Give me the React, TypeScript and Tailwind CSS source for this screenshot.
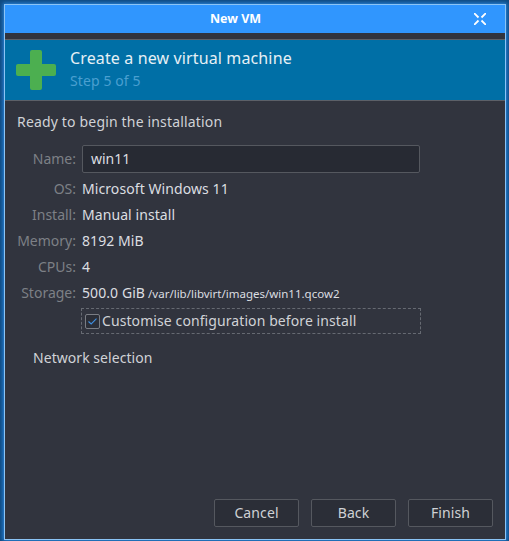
import React from "react";

function Row({ label, children }: { label: string; children: React.ReactNode }) {
  return (
    <div className="flex items-center h-[26px]">
      <div className="w-[59px] text-right text-[#7d8086] shrink-0">{label}</div>
      <div className="ml-[6px] text-[#dcdee1] flex items-baseline tracking-[0.08px]">{children}</div>
    </div>
  );
}

function Btn({ children }: { children: React.ReactNode }) {
  return (
    <div className="w-[85px] h-[28px] flex items-center justify-center rounded-[2px] border border-[#55585f] bg-[#2b2e37] text-[#cfd1d5] tracking-[0.1px]">
      {children}
    </div>
  );
}

export default function App() {
  return (
    <div className="w-[509px] h-[541px] bg-[#0f4a80] pt-[4px] pl-[4px] overflow-hidden font-['Noto_Sans',sans-serif] text-[14px] leading-[20px]">
      <div className="w-[502px] h-[536px] border border-[#8cc4f5] bg-[#31343e] flex flex-col shadow-[0_0_4px_1px_#2a86dc]">
        <div className="h-[28px] bg-[#3096fe] flex items-center justify-center pr-[39px] relative shrink-0">
          <span className="text-white font-bold text-[12.5px]">New VM</span>
          <svg className="absolute left-[469px] top-[8px]" width="12" height="12" viewBox="0 0 12 12" fill="none" stroke="#fff" strokeWidth="1.8">
            <path d="M0 0 L4.5 4.5 M12 0 L7.5 4.5 M0 12 L4.5 7.5 M12 12 L7.5 7.5" />
          </svg>
        </div>
        <div className="mt-[6px] h-[62px] bg-[#006fa6] border-y border-[#5c6068] border-x-0 flex items-center shrink-0">
          <svg className="ml-[11px] shrink-0" width="40" height="40" viewBox="0 0 40 40" fill="#4caf50">
            <rect x="14" y="0" width="12" height="40" rx="2" />
            <rect x="0" y="14" width="40" height="12" rx="2" />
          </svg>
          <div className="ml-[14px] pb-[2px]">
            <div className="text-[#e6f0f5] text-[16px] leading-[24px] tracking-[0.13px]">Create a new virtual machine</div>
            <div className="text-[#4a9fd0] text-[14px] leading-[22px] tracking-[0.1px]">Step 5 of 5</div>
          </div>
        </div>
        <div className="flex-1 flex flex-col px-[12px] pt-[11px] pb-[12px]">
          <div className="text-[#d0d2d6] tracking-[0.17px]">Ready to begin the installation</div>
          <div className="mt-[13px]">
            <div className="flex items-center h-[28px] mb-[3px]">
              <div className="w-[59px] text-right text-[#7d8086] shrink-0">Name:</div>
              <div className="ml-[6px] w-[338px] h-[28px] border border-[#55585f] rounded-[2px] bg-[#272a33] text-[#dcdee1] pl-[8px] flex items-center">win11</div>
            </div>
            <Row label="OS:">Microsoft Windows 11</Row>
            <Row label="Install:">Manual install</Row>
            <Row label="Memory:">8192 MiB</Row>
            <Row label="CPUs:">4</Row>
            <Row label="Storage:">
              500.0 GiB
              <span className="ml-[3px] text-[11.5px] tracking-normal">/var/lib/libvirt/images/win11.qcow2</span>
            </Row>
          </div>
          <div className="mt-[2px] ml-[64px] w-[340px] h-[26px] border border-dashed border-[#666a72] flex items-center pl-[3px] shrink-0">
            <div className="w-[15px] h-[15px] rounded-[2px] border border-[#7a7d84] bg-[#2b2e37] flex items-center justify-center shrink-0">
              <svg width="9" height="7" viewBox="0 0 9 7" fill="none" stroke="#3f8fe0" strokeWidth="1.1">
                <path d="M0.5 3.5 L3.2 6 L8.5 0.7" />
              </svg>
            </div>
            <span className="ml-[2px] text-[#d0d2d6] tracking-[0.09px]">Customise configuration before install</span>
          </div>
          <div className="mt-[14px] ml-[16px] text-[#d0d2d6] tracking-[0.05px]">Network selection</div>
          <div className="mt-auto flex justify-end gap-[12px]">
            <Btn>Cancel</Btn>
            <Btn>Back</Btn>
            <Btn>Finish</Btn>
          </div>
        </div>
      </div>
    </div>
  );
}
